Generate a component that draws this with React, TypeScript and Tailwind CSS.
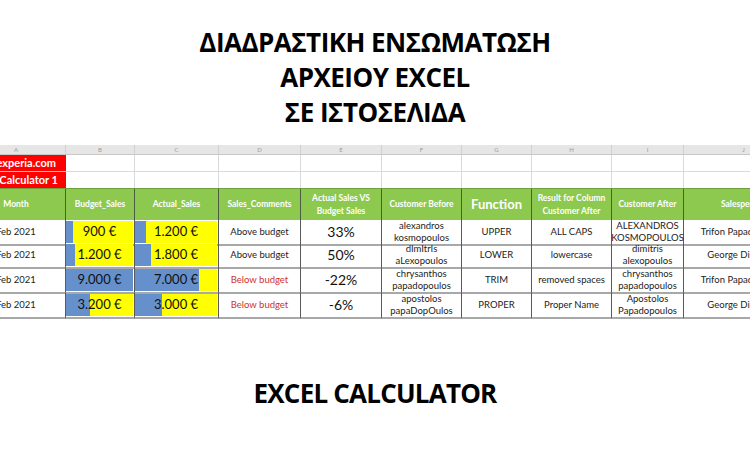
const COLS = ['A', 'B', 'C', 'D', 'E', 'F', 'G', 'H', 'I', 'J'];

const HEADERS = [
  'Month',
  'Budget_Sales',
  'Actual_Sales',
  'Sales_Comments',
  'Actual Sales VS Budget Sales',
  'Customer Before',
  'Function',
  'Result for Column Customer After',
  'Customer After',
  'Salesperson',
];

type Row = {
  month: string;
  budget: number;
  actual: number;
  comment: string;
  diff: string;
  before: [string, string];
  fn: string;
  result: string;
  after: [string, string];
  sales: string;
  h: string;
};

const ROWS: Row[] = [
  { month: 'Feb 2021', budget: 900, actual: 1200, comment: 'Above budget', diff: '33%', before: ['alexandros', 'kosmopoulos'], fn: 'UPPER', result: 'ALL CAPS', after: ['ALEXANDROS', 'KOSMOPOULOS'], sales: 'Trifon Papadopoulos', h: 'h-[23px]' },
  { month: 'Feb 2021', budget: 1200, actual: 1800, comment: 'Above budget', diff: '50%', before: ['dImItrIs', 'aLexopoulos'], fn: 'LOWER', result: 'lowercase', after: ['dimitris', 'alexopoulos'], sales: 'George Dimitriou', h: 'h-[25px]' },
  { month: 'Feb 2021', budget: 9000, actual: 7000, comment: 'Below budget', diff: '-22%', before: ['chrysanthos', 'papadopoulos'], fn: 'TRIM', result: 'removed spaces', after: ['chrysanthos', 'papadopoulos'], sales: 'Trifon Papadopoulos', h: 'h-[25px]' },
  { month: 'Feb 2021', budget: 3200, actual: 3000, comment: 'Below budget', diff: '-6%', before: ['apostolos', 'papaDopOulos'], fn: 'PROPER', result: 'Proper Name', after: ['Apostolos', 'Papadopoulos'], sales: 'George Dimitriou', h: 'h-[25px]' },
];

const MAX = 9000;
const grid = 'grid grid-cols-[99px_69px_84px_82px_81px_80px_70px_80px_72px_120px]';
const euro = (n: number) => n.toLocaleString('de-DE') + ' €';

function BarCell({ value }: { value: number }) {
  return (
    <div className="relative h-full border-r border-[#5a5a5a] border-b-2 border-b-[#a8a8a8] py-[1px] pr-[1px]">
      <div className="relative h-full bg-[#ffff00]">
        <div className="absolute left-0 top-0 bottom-0 bg-[#6590cc]" style={{ width: `${(value / MAX) * 100}%` }} />
        <span className="relative flex h-full items-center justify-center text-[13px] text-[#111]">{euro(value)}</span>
      </div>
    </div>
  );
}

function Cell({ children, className = '' }: { children: React.ReactNode; className?: string }) {
  return (
    <div className={`flex h-full flex-col items-center justify-center text-center leading-[12px] border-r border-[#5a5a5a] border-b-2 border-b-[#a8a8a8] ${className}`}>
      {children}
    </div>
  );
}

export default function App() {
  return (
    <div className="w-[750px] h-[465px] overflow-hidden bg-white" style={{ fontFamily: 'Lato, "Open Sans", sans-serif' }}>
      <div className="pt-[25px] text-center text-[26px] leading-[35px] font-bold text-black tracking-[-0.02em]" style={{ fontFamily: '"Open Sans", "Noto Sans", sans-serif' }}>
        <div>ΔΙΑΔΡΑΣΤΙΚΗ ΕΝΣΩΜΑΤΩΣΗ</div>
        <div>ΑΡΧΕΙΟΥ EXCEL</div>
        <div>ΣΕ ΙΣΤΟΣΕΛΙΔΑ</div>
      </div>

      <div className="mt-[15px] -ml-[33px] w-[837px]">
        {/* column letters */}
        <div className={`${grid} h-[10px] bg-[#e6e6e6] border-b border-[#c8c8c8]`}>
          {COLS.map((c) => (
            <div key={c} className="flex items-center justify-center border-r border-[#d0d0d0] text-[6px] text-[#9a9a9a]">
              {c}
            </div>
          ))}
        </div>

        {/* title rows */}
        <div className={`${grid} h-[17px]`}>
          <div className="flex items-center justify-end overflow-hidden whitespace-nowrap bg-[#ff0000] pr-[10px] text-[11px] font-bold text-white border-b border-[#ffb3b3]">
            excelexperia.com
          </div>
          {COLS.slice(1).map((c) => (
            <div key={c} className="border-r border-b border-[#dadada]" />
          ))}
        </div>
        <div className={`${grid} h-[16px]`}>
          <div className="flex items-center justify-end overflow-hidden whitespace-nowrap bg-[#ff0000] pr-[8px] text-[11px] font-bold text-white">
            Excel Calculator 1
          </div>
          {COLS.slice(1).map((c) => (
            <div key={c} className="border-r border-[#dadada]" />
          ))}
        </div>

        {/* header */}
        <div className={`${grid} h-[32px] bg-[#8dc94e] border-t border-[#6f9f3c]`}>
          {HEADERS.map((h) => (
            <div
              key={h}
              className={`flex items-center justify-center text-center font-bold text-white border-r border-[#4d5a44] ${
                h === 'Function' ? 'text-[13px]' : h === 'Customer After' ? 'text-[8.5px]' : 'px-[1px] text-[8.5px] leading-[13px]'
              }`}
            >
              {h}
            </div>
          ))}
        </div>

        {/* data */}
        {ROWS.map((r, i) => (
          <div key={i} className={`${grid} ${r.h} text-[9.5px] text-[#222]`}>
            <Cell>{r.month}</Cell>
            <BarCell value={r.budget} />
            <BarCell value={r.actual} />
            <Cell className={r.comment.startsWith('Below') ? 'text-[#d0312d]' : ''}>{r.comment}</Cell>
            <Cell className="text-[14px] text-[#111]">{r.diff}</Cell>
            <Cell>
              <span>{r.before[0]}</span>
              <span>{r.before[1]}</span>
            </Cell>
            <Cell>{r.fn}</Cell>
            <Cell>{r.result}</Cell>
            <Cell>
              <span>{r.after[0]}</span>
              <span>{r.after[1]}</span>
            </Cell>
            <Cell className="whitespace-nowrap">{r.sales}</Cell>
          </div>
        ))}
      </div>

      <div className="mt-[57px] text-center text-[26px] leading-[36px] font-bold text-black tracking-[-0.03em]" style={{ fontFamily: '"Open Sans", "Noto Sans", sans-serif' }}>
        EXCEL CALCULATOR
      </div>
    </div>
  );
}
